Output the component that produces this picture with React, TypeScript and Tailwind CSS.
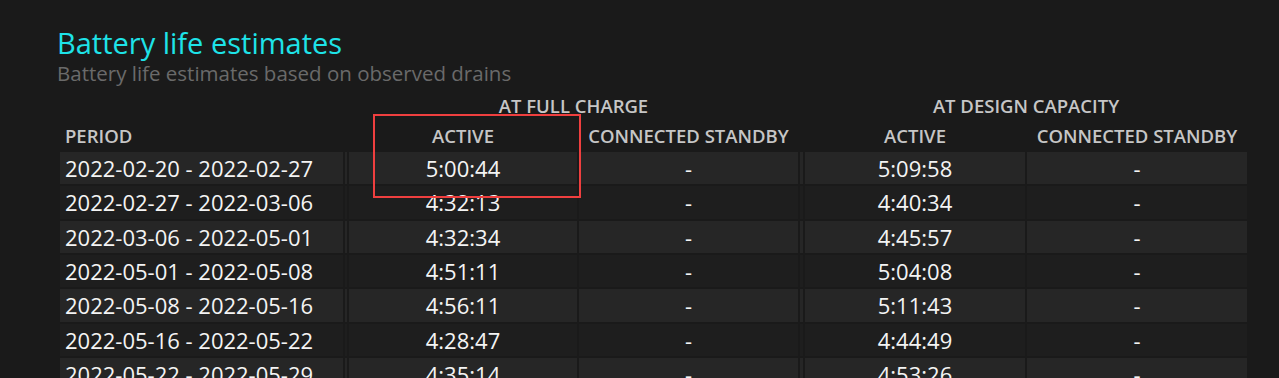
const rows = [
  { period: "2022-02-20 - 2022-02-27", full: "5:00:44", design: "5:09:58" },
  { period: "2022-02-27 - 2022-03-06", full: "4:32:13", design: "4:40:34" },
  { period: "2022-03-06 - 2022-05-01", full: "4:32:34", design: "4:45:57" },
  { period: "2022-05-01 - 2022-05-08", full: "4:51:11", design: "5:04:08" },
  { period: "2022-05-08 - 2022-05-16", full: "4:56:11", design: "5:11:43" },
  { period: "2022-05-16 - 2022-05-22", full: "4:28:47", design: "4:44:49" },
  { period: "2022-05-22 - 2022-05-29", full: "4:35:14", design: "4:53:26" },
];

export default function App() {
  return (
    <div
      className="relative h-[378px] overflow-hidden bg-[#1a1a1a] pl-[57px] pt-[25px]"
      style={{ fontFamily: '"Open Sans", "Noto Sans", sans-serif' }}
    >
      <h2 className="text-[29px] leading-[36px] text-[#1ee3e8]">Battery life estimates</h2>
      <p className="text-[20.5px] leading-[24px] text-[#6a6a6a]">
        Battery life estimates based on observed drains
      </p>

      <table className="ml-[1px] mt-[5px] table-fixed border-separate border-spacing-[2px]">
        <colgroup>
          <col className="w-[283px]" />
          <col className="w-[2px]" />
          <col className="w-[228px]" />
          <col className="w-[219px]" />
          <col className="w-[3px]" />
          <col className="w-[220px]" />
          <col className="w-[220px]" />
        </colgroup>
        <thead className="text-[18.5px] uppercase text-[#c6c6c6]">
          <tr className="h-[28px]">
            <th />
            <th />
            <th colSpan={2} className="text-center font-semibold">At full charge</th>
            <th />
            <th colSpan={2} className="text-center font-semibold">At design capacity</th>
          </tr>
          <tr className="h-[28px]">
            <th className="pl-[5px] text-left font-semibold">Period</th>
            <th />
            <th className="text-center font-semibold">Active</th>
            <th className="text-center font-semibold">Connected standby</th>
            <th />
            <th className="text-center font-semibold">Active</th>
            <th className="text-center font-semibold">Connected standby</th>
          </tr>
        </thead>
        <tbody className="text-[22px] text-[#f4f4f4]">
          {rows.map((r, i) => (
            <tr
              key={r.period}
              className={`h-[32.33px] ${i % 2 === 0 ? "bg-[#262626]" : "bg-[#1e1e1e]"}`}
            >
              <td className="pl-[5px] leading-none">{r.period}</td>
              <td />
              <td className="text-center leading-none">{r.full}</td>
              <td className="text-center leading-none">-</td>
              <td />
              <td className="text-center leading-none">{r.design}</td>
              <td className="text-center leading-none">-</td>
            </tr>
          ))}
        </tbody>
      </table>

      {/* highlight marker around the first active value */}
      <div className="pointer-events-none absolute left-[373px] top-[114px] h-[84px] w-[208px] border-[2px] border-[#ef3f3f]" />
    </div>
  );
}
